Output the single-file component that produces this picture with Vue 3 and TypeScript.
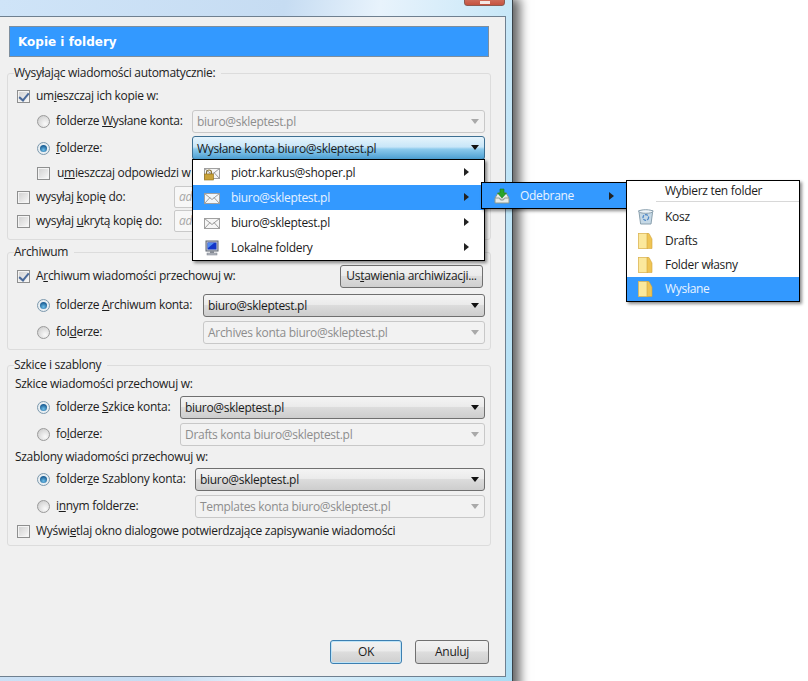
<script setup lang="ts">
const folders = [
  { name: 'Kosz', icon: 'bin', active: false },
  { name: 'Drafts', icon: 'folder', active: false },
  { name: 'Folder własny', icon: 'folder', active: false },
  { name: 'Wysłane', icon: 'folder', active: true },
]
const accounts = [
  { name: 'piotr.karkus@shoper.pl', icon: 'lock', active: false },
  { name: 'biuro@skleptest.pl', icon: 'mail', active: true },
  { name: 'biuro@skleptest.pl', icon: 'mail', active: false },
  { name: 'Lokalne foldery', icon: 'pc', active: false },
]
</script>

<template>
  <div class="page">
    <div class="window">
      <div class="chrome"><div class="close"><span class="close-x"></span></div></div>
      <div class="panel">
        <div class="banner">Kopie i foldery</div>

        <fieldset class="group g1">
          <legend>Wysyłając wiadomości automatycznie:</legend>
          <div class="row">
            <span class="check on"></span><span class="lab">um<u>i</u>eszczaj ich kopie w:</span>
          </div>
          <div class="row in mt1">
            <span class="radio"></span><span class="lab w-wys">folderze <u>W</u>ysłane konta:</span>
            <div class="select off">biuro@skleptest.pl<i class="arrow"></i></div>
          </div>
          <div class="row in mt3">
            <span class="radio on"></span><span class="lab w-wys"><u>f</u>olderze:</span>
            <div class="select focus">Wysłane konta biuro@skleptest.pl<i class="arrow"></i></div>
          </div>
          <div class="row in mt1">
            <span class="check"></span><span class="lab nudge">u<u>m</u>ieszczaj odpowiedzi w</span>
          </div>
          <div class="row">
            <span class="check"></span><span class="lab w-kop">wysyłaj <u>k</u>opię do:</span>
            <div class="input">adres</div>
          </div>
          <div class="row">
            <span class="check"></span><span class="lab w-kop">wysyłaj <u>u</u>krytą kopię do:</span>
            <div class="input">adres</div>
          </div>
        </fieldset>

        <fieldset class="group g2">
          <legend>Archiwum</legend>
          <div class="row">
            <span class="check on"></span><span class="lab">A<u>r</u>chiwum wiadomości przechowuj w:</span>
            <button class="btn settings">Us<u>t</u>awienia archiwizacji...</button>
          </div>
          <div class="row in mt5">
            <span class="radio on"></span><span class="lab w-arc">folderze <u>A</u>rchiwum konta:</span>
            <div class="select">biuro@skleptest.pl<i class="arrow"></i></div>
          </div>
          <div class="row in mt3">
            <span class="radio"></span><span class="lab w-arc">fol<u>d</u>erze:</span>
            <div class="select off">Archives konta biuro@skleptest.pl<i class="arrow"></i></div>
          </div>
        </fieldset>

        <fieldset class="group g3">
          <legend>Szkice i szablony</legend>
          <div class="head h1">Szkice wiadomości przechowuj w:</div>
          <div class="row in">
            <span class="radio on"></span><span class="lab w-szk">folderze <u>S</u>zkice konta:</span>
            <div class="select">biuro@skleptest.pl<i class="arrow"></i></div>
          </div>
          <div class="row in mt3">
            <span class="radio"></span><span class="lab w-szk">fo<u>l</u>derze:</span>
            <div class="select off">Drafts konta biuro@skleptest.pl<i class="arrow"></i></div>
          </div>
          <div class="head h2">Szablony wiadomości przechowuj w:</div>
          <div class="row in">
            <span class="radio on"></span><span class="lab w-sza">folder<u>z</u>e Szablony konta:</span>
            <div class="select">biuro@skleptest.pl<i class="arrow"></i></div>
          </div>
          <div class="row in mt3">
            <span class="radio"></span><span class="lab w-sza">i<u>n</u>nym folderze:</span>
            <div class="select off">Templates konta biuro@skleptest.pl<i class="arrow"></i></div>
          </div>
          <div class="row mt1">
            <span class="check"></span><span class="lab">Wyświ<u>e</u>tlaj okno dialogowe potwierdzające zapisywanie wiadomości</span>
          </div>
        </fieldset>

        <div class="footer">
          <button class="btn ok">OK</button>
          <button class="btn cancel">Anuluj</button>
        </div>
      </div>
    </div>

    <div class="menu m-accounts">
      <div v-for="a in accounts" :key="a.name + a.active" class="acc" :class="{ hi: a.active }">
        <svg class="ico" viewBox="0 0 16 16" width="16" height="16">
          <template v-if="a.icon === 'pc'">
            <rect x="2" y="1" width="12" height="10" fill="#c8ccd4" stroke="#5c6470" stroke-width="1"/>
            <rect x="3.500" y="2.500" width="9" height="7" fill="#1236c8"/>
            <path d="M4 3h6l-6 5z" fill="#4f8cf0"/>
            <rect x="6" y="11" width="4" height="2" fill="#8a8f98"/>
            <rect x="3" y="13" width="10" height="2" fill="#b4b8c0" stroke="#777d88" stroke-width=".5"/>
          </template>
          <template v-else>
            <rect x=".5" y="3.500" width="15" height="10" :fill="a.active ? '#f2f6fa' : '#f6f6f6'" stroke="#a0a0a0"/>
            <path d="M.5 3.500l7.500 6 7.500-6M.5 13.500l5.500-6M15.500 13.500l-5.500-6" fill="none" stroke="#9a9a9a"/>
            <template v-if="a.icon === 'lock'">
              <path d="M2.500 9.500v-2a2.500 2.500 0 0 1 5 0v2" fill="none" stroke="#8a7436" stroke-width="1.200"/>
              <rect x=".5" y="9" width="9" height="6" fill="#c9a238" stroke="#8a6c18" stroke-width=".6"/>
            </template>
          </template>
        </svg>
        <span class="acc-name">{{ a.name }}</span>
        <i class="tri"></i>
      </div>
    </div>

    <div class="menu m-inbox">
      <svg class="ico" viewBox="0 0 16 16" width="16" height="16">
        <path d="M1 10l3-5h8l3 5v5H1z" fill="#e8ebe6" stroke="#8c9a90"/>
        <path d="M1 10h4.500l1 2h3l1-2H15" fill="#cdd5cd" stroke="#8c9a90"/>
        <path d="M6 1h4v4h2.500L8 10 3.500 5H6z" fill="#2aa52a" stroke="#1c7a1c" stroke-width=".6"/>
      </svg>
      <span class="inbox-name">Odebrane</span>
      <i class="tri"></i>
    </div>

    <div class="menu m-folders">
      <div class="pick">Wybierz ten folder</div>
      <div class="sep"></div>
      <div v-for="f in folders" :key="f.name" class="fold" :class="{ hi: f.active }">
        <svg v-if="f.icon === 'bin'" class="ico" viewBox="0 0 16 16" width="16" height="16">
          <path d="M.8 1.500h14l-1.800 13.500H2.600z" fill="#c6d9e6" stroke="#8aa0ae"/>
          <ellipse cx="7.800" cy="2.500" rx="7" ry="1.800" fill="#eef4f8" stroke="#8aa0ae"/>
          <circle cx="7.800" cy="8.500" r="2.800" fill="none" stroke="#4d86c6" stroke-width="1.300" stroke-dasharray="3 1"/>
        </svg>
        <svg v-else class="ico" viewBox="0 0 16 16" width="16" height="16">
          <rect x=".5" y=".5" width="9" height="15" fill="#fbe89c" stroke="#dcb655" stroke-width=".8"/>
          <path d="M9 .5l2 0 3 5.500V15.500H9z" fill="#efc453" stroke="#d2a63e" stroke-width=".6"/>
        </svg>
        <span class="fold-name">{{ f.name }}</span>
      </div>
    </div>
  </div>
</template>

<style>
html, body { margin: 0; background: #fff; }
</style>

<style scoped>
.page {
  position: relative;
  width: 808px;
  height: 681px;
  overflow: hidden;
  background: #fff;
  font: 12px/16px "Open Sans", "Noto Sans", sans-serif;
  letter-spacing: -0.3px;
  color: #1c1c1c;
}
.window {
  width: 512px;
  height: 700px;
  background: linear-gradient(100deg, #cfe4f8 0%, #c6dcf2 45%, #e8f3fc 60%, #a9dcf3 100%);
  box-shadow: 1px 0 0 #3a4248, 6px 0 10px 2px rgba(0, 0, 0, .6);
  display: flex;
  flex-direction: column;
}
.chrome { height: 16px; position: relative; flex: none; }
.close {
  position: absolute;
  left: 464px;
  top: -12px;
  width: 41px;
  height: 18px;
  border-radius: 3px;
  background: linear-gradient(#e0a090, #c5523f);
  border: 1px solid #8c5a50;
  box-sizing: border-box;
}
.close-x { display: block; width: 10px; height: 3px; margin: 12px auto 0; background: #f4e7e4; }
.panel {
  width: 506px;
  height: 661px;
  box-sizing: border-box;
  flex: none;
  background: #f0f0f0;
  border: 1px solid #6f8090;
  border-left: 0;
  padding: 9px 0 0 9px;
  display: flex;
  flex-direction: column;
}
.banner {
  width: 480px;
  height: 31px;
  box-sizing: border-box;
  background: #3399ff;
  border: 1px solid #7d8e9e;
  color: #fff;
  font: bold 12px/30px "DejaVu Sans", sans-serif;
  letter-spacing: 0;
  padding-left: 8px;
}
.group {
  width: 484px;
  box-sizing: border-box;
  margin: 0 0 0 -2px;
  border: 1px solid #dcdcdc;
  border-radius: 3px;
  padding: 0 5px 0 9px;
  min-width: 0;
}
.group legend { padding: 0 6px 0 0; margin-left: -3px; height: 16px; line-height: 16px; color: #222; background: #f0f0f0; }
.g1 { margin-top: 8px; height: 175px; padding-top: 3px; }
.g2 { margin-top: 4px; height: 106px; padding-top: 4px; }
.g3 { margin-top: 7px; height: 189px; padding-top: 0; }
.row { display: flex; align-items: center; height: 24px; }
.in { padding-left: 20px; }
.mt1 { margin-top: 1px; }
.mt3 { margin-top: 3px; }
.mt5 { margin-top: 5px; }
.head { margin-left: -2px; display: flex; align-items: center; }
.h1 { height: 22px; }
.h2 { height: 21px; }
.lab { margin-left: 6px; white-space: nowrap; flex: none; }
.nudge { margin-left: 7px; }
.w-wys { width: 136px; }
.w-arc { width: 147px; }
.w-szk { width: 124px; }
.w-sza { width: 139px; }
.w-kop { width: 138px; }
.check {
  width: 13px;
  height: 13px;
  box-sizing: border-box;
  flex: none;
  border: 1px solid #8e8f8f;
  background: linear-gradient(135deg, #cfcfcf, #ececec 70%, #fff);
  box-shadow: inset 0 0 0 1px #f4f4f4;
  position: relative;
}
.check.on::after {
  content: "";
  position: absolute;
  left: 3px;
  top: 0;
  width: 4px;
  height: 8px;
  border: solid #4a6a9a;
  border-width: 0 2px 2px 0;
  transform: rotate(40deg);
}
.radio {
  width: 13px;
  height: 13px;
  box-sizing: border-box;
  flex: none;
  border-radius: 50%;
  border: 1px solid #9a9a9a;
  background: radial-gradient(circle at 65% 70%, #fafafa, #dcdcdc 60%, #c4c4c4);
  position: relative;
}
.radio.on { border-color: #7d99ad; background: #e8eef2; }
.radio.on::after {
  content: "";
  position: absolute;
  left: 2px;
  top: 2px;
  width: 7px;
  height: 7px;
  border-radius: 50%;
  background: radial-gradient(circle at 50% 70%, #6fc0ea, #1b5f96 70%);
}
.select {
  flex: 1;
  min-width: 0;
  height: 23px;
  box-sizing: border-box;
  border: 1px solid #6f6f6f;
  border-radius: 3px;
  background: linear-gradient(#f4f4f4 0, #ebebeb 45%, #dcdcdc 50%, #cdcdcd 100%);
  line-height: 22px;
  padding-left: 4px;
  position: relative;
  white-space: nowrap;
  color: #1a1a1a;
}
.select.off { border-color: #c8c8c8; background: #f2f2f2; color: #8d8d8d; }
.select.focus {
  border-color: #3c6f92;
  background: linear-gradient(#e6f4fc 0, #c8e6f8 45%, #8ccaec 55%, #4c9fd2 100%);
  height: 24px;
  line-height: 24px;
}
.arrow {
  position: absolute;
  right: 5px;
  top: 8px;
  border: solid transparent;
  border-width: 5px 4px 0;
  border-top-color: #111;
}
.select.off .arrow { border-top-color: #a9a9a9; }
.input {
  flex: 1;
  min-width: 0;
  height: 22px;
  box-sizing: border-box;
  border: 1px solid #c9c9c9;
  border-radius: 2px;
  background: #f7f7f7;
  margin-right: 1px;
  color: #a8a8a8;
  font-style: italic;
  line-height: 20px;
  padding-left: 4px;
}
.btn {
  font: inherit;
  letter-spacing: inherit;
  color: #1c1c1c;
  box-sizing: border-box;
  border: 1px solid #707070;
  border-radius: 3px;
  background: linear-gradient(#f2f2f2 0, #ebebeb 45%, #dddddd 50%, #cfcfcf 100%);
  padding: 0;
}
.settings { width: 143px; height: 23px; margin-left: auto; margin-right: 2px; }
.footer {
  display: flex;
  margin-top: 94px;
  margin-left: 321px;
  gap: 13px;
}
.ok {
  width: 72px;
  height: 24px;
  border-color: #3c7fb1;
  box-shadow: inset 0 0 0 1px #bfe4f7;
}
.cancel { width: 74px; height: 24px; }
.menu {
  position: absolute;
  box-sizing: border-box;
  background: #fff;
  border: 1px solid #000;
  box-shadow: 2px 2px 3px rgba(0, 0, 0, .45);
  color: #1c1c1c;
}
.m-accounts { left: 192px; top: 159px; width: 293px; height: 102px; }
.acc { height: 25px; display: flex; align-items: center; padding-left: 11px; position: relative; }
.hi { background: #3399ff; color: #e8f3ff; }
.acc-name { margin-left: 11px; }
.ico { flex: none; }
.tri {
  position: absolute;
  border: solid transparent;
  border-width: 4px 0 4px 5px;
  border-left-color: #222;
}
.acc .tri { left: 271px; top: 8px; }
.m-inbox {
  left: 481px;
  top: 182px;
  width: 146px;
  height: 27px;
  background: #3399ff;
  color: #e8f3ff;
  display: flex;
  align-items: center;
  padding-left: 12px;
}
.inbox-name { margin-left: 10px; }
.m-inbox .tri { left: 127px; top: 9px; }
.m-folders { left: 626px; top: 180px; width: 174px; height: 122px; }
.pick { height: 20px; line-height: 19px; padding-left: 38px; }
.sep { height: 1px; background: #d8d8d8; margin-left: 29px; margin-bottom: 3px; }
.fold { height: 24px; display: flex; align-items: center; padding-left: 11px; }
.fold-name { margin-left: 11px; }
</style>
